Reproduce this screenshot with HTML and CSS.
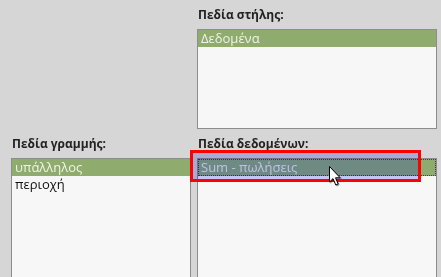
FILE: index.html
```html
<!DOCTYPE html>
<html lang="el">
<head>
    <meta charset="UTF-8">
    <meta name="viewport" content="width=device-width, initial-scale=1.0">
    <title>Πεδία</title>
    <link rel="stylesheet" href="styles.css">
</head>
<body>
    <div class="pane">
        <div class="field field-col">
            <h2 class="field-title">Πεδία στήλης:</h2>
            <ul class="field-list field-list-short">
                <li class="is-selected">Δεδομένα</li>
            </ul>
        </div>
        <div class="field field-row">
            <h2 class="field-title">Πεδία γραμμής:</h2>
            <ul class="field-list">
                <li class="is-selected">υπάλληλος</li>
                <li>περιοχή</li>
            </ul>
        </div>
        <div class="field field-data">
            <h2 class="field-title">Πεδία δεδομένων:</h2>
            <ul class="field-list">
                <li class="is-selected is-focused">Sum - πωλήσεις</li>
            </ul>
        </div>
        <!-- highlight frame drawn over the data field -->
        <div class="marker"></div>
        <svg class="pointer" width="14" height="22" viewBox="0 0 14 22">
            <path d="M1.5 1.5 L1.5 17 L5 13.6 L7.8 20 L10.2 19 L7.5 12.8 L12.2 12.8 Z" fill="#fff" stroke="#000" stroke-width="1" stroke-linejoin="miter"/>
        </svg>
    </div>
</body>
</html>
```

FILE: styles.css
```css
body {
    margin: 0;
    height: 100vh;
    overflow: hidden;
    background-color: #d6d6d6;
    font-family: 'Open Sans', 'Noto Sans', sans-serif;
    color: #1e1e1e;
}
.pane {
    position: relative;
    display: grid;
    grid-template-columns: 180px 240px;
    column-gap: 6px;
    row-gap: 7px;
    padding: 7px 0 0 11px;
}
.field-col {
    grid-column: 2;
    grid-row: 1;
}
.field-row {
    grid-column: 1;
    grid-row: 2;
}
.field-data {
    grid-column: 2;
    grid-row: 2;
}
.field-title {
    margin: 0 0 6px 1px;
    font-size: 12px;
    line-height: 16px;
    font-weight: bold;
    color: #222;
}
.field-list {
    list-style: none;
    margin: 0;
    padding: 0;
    height: 119px;
    box-sizing: border-box;
    border: 1px solid #8d8d8d;
    border-bottom: none; /* list runs on below the window */
    background-color: #f7f7f7;
}
.field-list-short {
    height: 100px;
    border-bottom: 1px solid #8d8d8d;
}
.field-list li {
    height: 17px;
    padding-left: 3px;
    font-size: 13px;
    line-height: 17px;
    color: #111;
    white-space: nowrap;
}
.field-list li.is-selected {
    background-color: #8fac6e;
    color: #eef3e6;
}
.field-list li.is-focused {
    background: linear-gradient(to right, #8bad83 0 220px, #8fac6e 220px);
    outline: 1px dotted #3c3c5a;
    outline-offset: -1px;
}
.marker {
    position: absolute;
    left: 190px;
    top: 150px;
    width: 231px;
    height: 32px;
    box-sizing: border-box;
    border: 3px solid #ff0000;
}
.marker::before {
    content: '';
    position: absolute;
    inset: 0;
    background-color: #cbcbff;
    mix-blend-mode: multiply;
}
.pointer {
    position: absolute;
    left: 328px;
    top: 165px;
    filter: drop-shadow(1px 1px 0.5px rgba(0, 0, 0, 0.35));
}
```
